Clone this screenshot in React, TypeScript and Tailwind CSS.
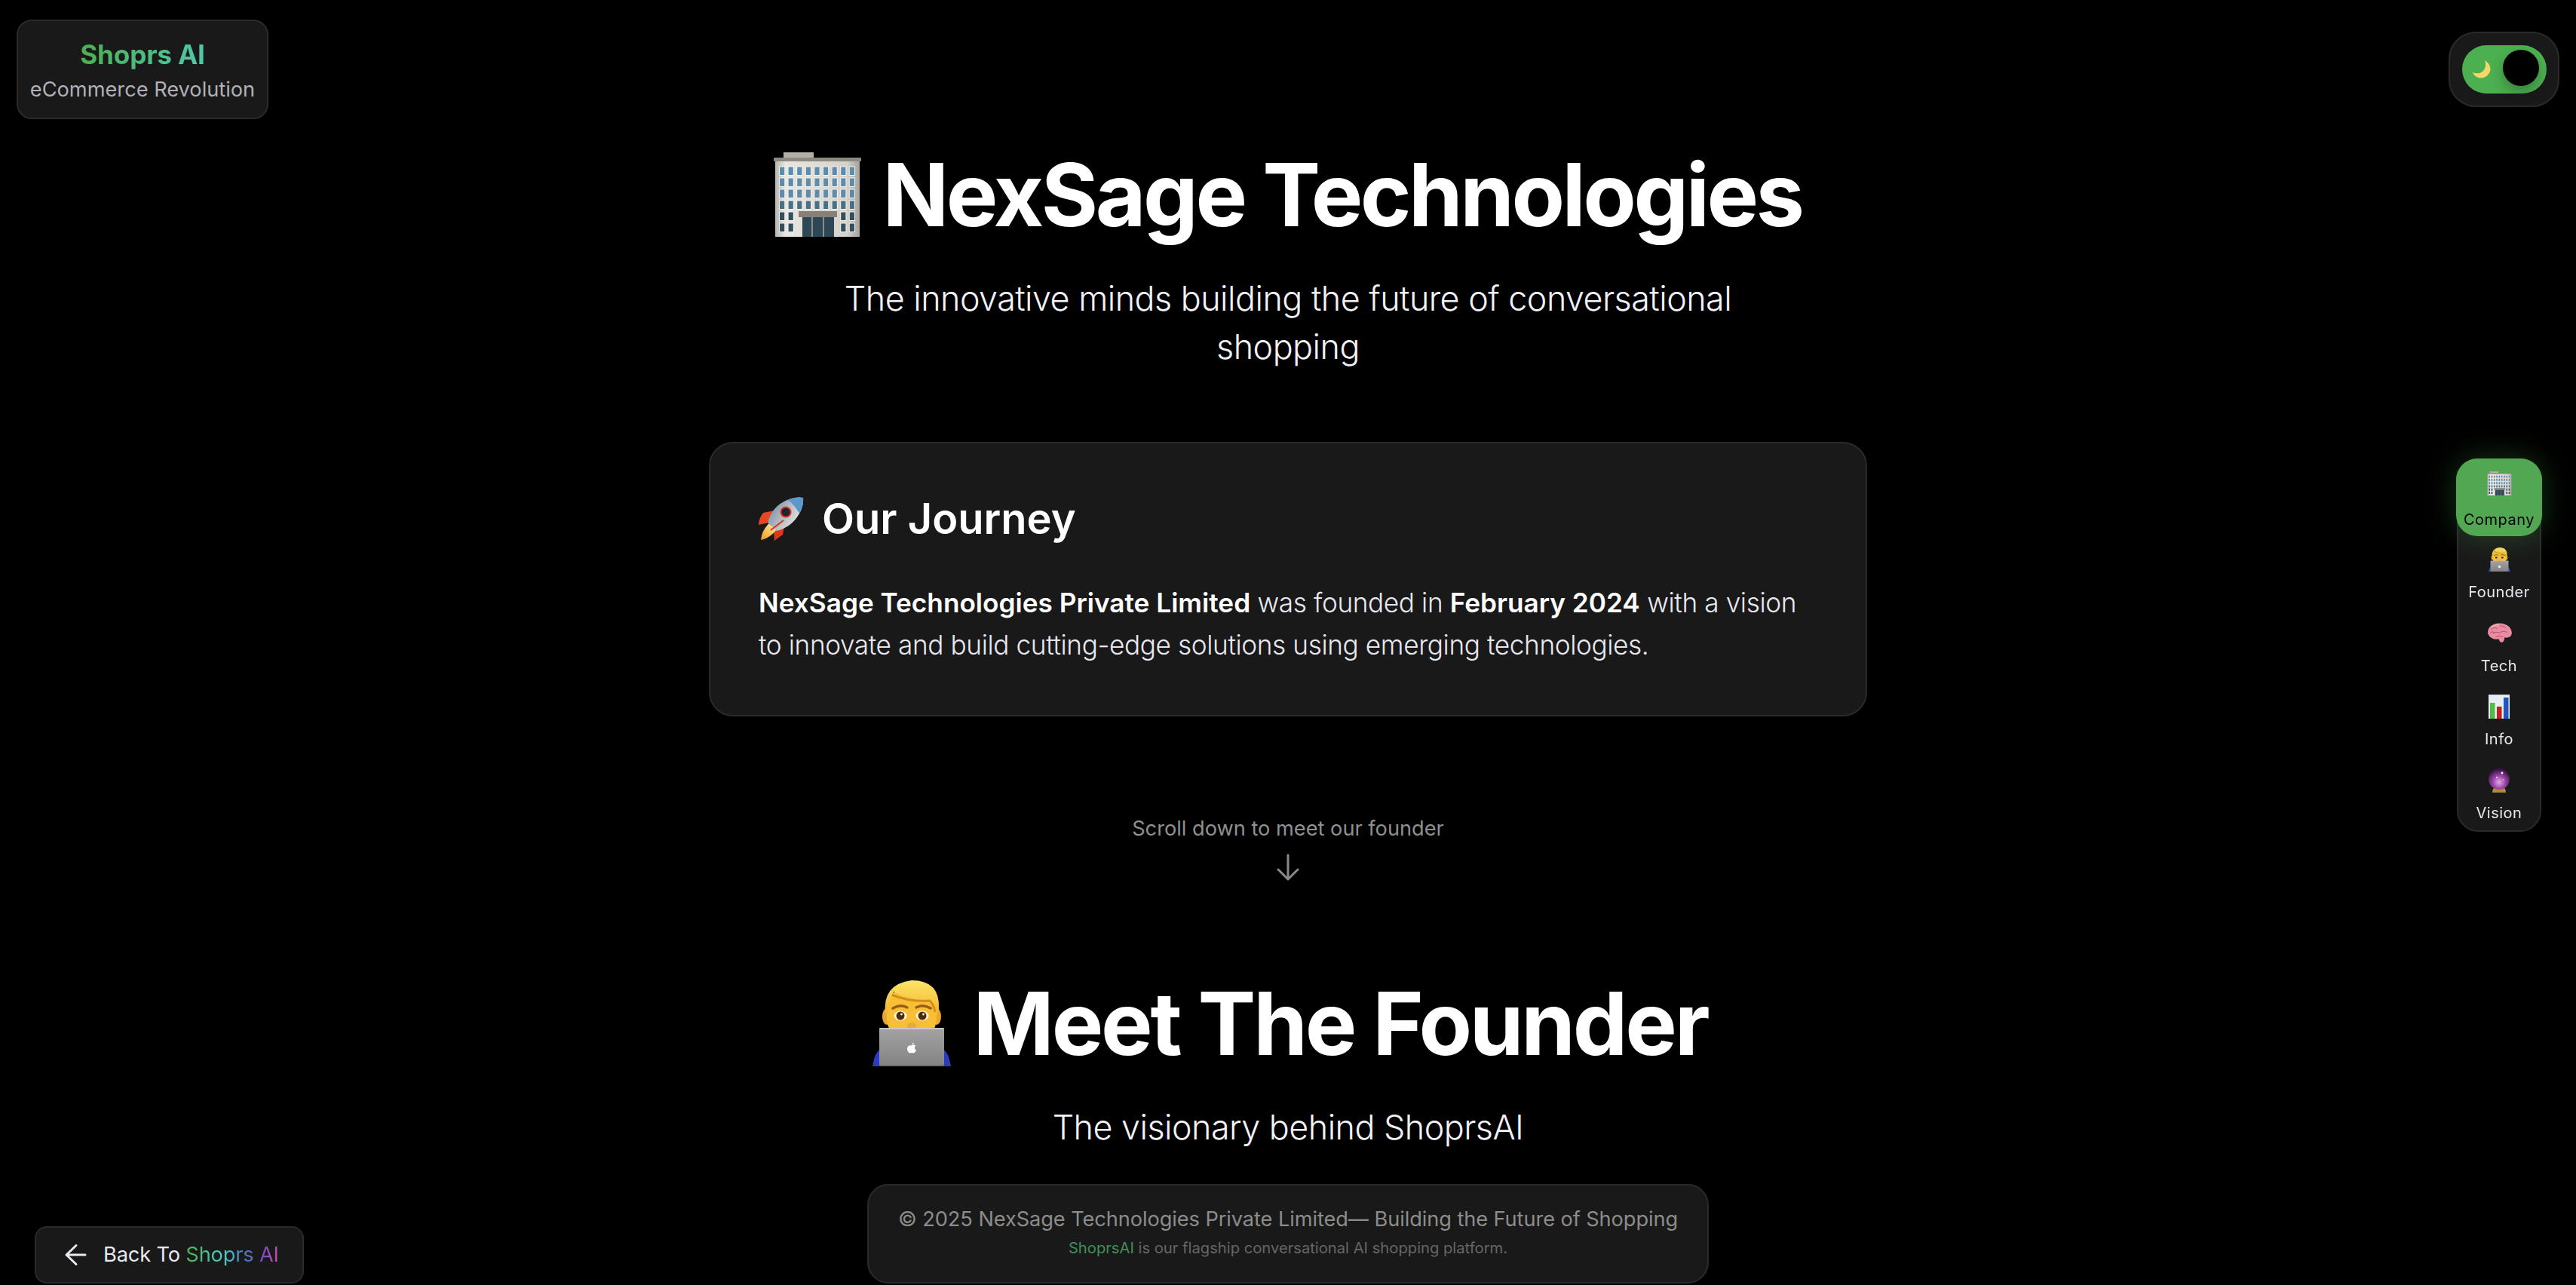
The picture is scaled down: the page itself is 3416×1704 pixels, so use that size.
import React from "react";

function Building({ className }: { className: string }) {
  const cols = [0, 1, 2, 3, 4, 5, 6, 7, 8];
  const rows = [0, 1, 2, 3, 4, 5];
  return (
    <svg viewBox="0 0 116 112" className={className}>
      <defs>
        <linearGradient id="bBody" x1="0" y1="0" x2="1" y2="0">
          <stop offset="0" stopColor="#b9b5ae" />
          <stop offset="0.12" stopColor="#e9e7e1" />
          <stop offset="0.85" stopColor="#d5d2cb" />
          <stop offset="1" stopColor="#a7a39c" />
        </linearGradient>
      </defs>
      <rect x="13" y="0" width="40" height="8" fill="#b3aea6" />
      <rect x="2" y="10" width="112" height="102" fill="url(#bBody)" />
      <rect x="0" y="7" width="116" height="5" rx="1" fill="#8d8880" />
      {rows.map((r) =>
        cols.map((c) =>
          r > 3 && c > 1 && c < 7 ? null : (
            <g key={`${r}-${c}`}>
              <rect x={7 + c * 11.6} y={18.5 + r * 15} width={8.2} height={12.5} fill="#f2f2ee" />
              <rect
                x={8 + c * 11.6}
                y={19.5 + r * 15}
                width={6.2}
                height={10.5}
                fill={r > 3 ? "#33505f" : r > 2 ? "#4a7088" : "#5f8cab"}
              />
            </g>
          )
        )
      )}
      <rect x="33" y="78" width="51" height="8" fill="#86807a" />
      <rect x="38" y="86" width="42" height="26" fill="#2f4654" />
      <rect x="50" y="86" width="2" height="26" fill="#88908f" />
      <rect x="65" y="86" width="2" height="26" fill="#88908f" />
    </svg>
  );
}

function Technologist({ className }: { className: string }) {
  return (
    <svg viewBox="0 0 104 114" className={className}>
      <defs>
        <linearGradient id="tLaptop" x1="0" y1="0" x2="0" y2="1">
          <stop offset="0" stopColor="#a3a3a3" />
          <stop offset="1" stopColor="#838383" />
        </linearGradient>
        <linearGradient id="tHair" x1="0" y1="0" x2="0" y2="1">
          <stop offset="0" stopColor="#fde468" />
          <stop offset="1" stopColor="#f0b428" />
        </linearGradient>
      </defs>
      <path d="M0 114Q3 95 11 91V114Z" fill="#2b3cc0" />
      <path d="M104 114Q101 95 93 91V114Z" fill="#2b3cc0" />
      <ellipse cx="19" cy="48" rx="6" ry="11" fill="#e9a92b" />
      <ellipse cx="85" cy="48" rx="6" ry="11" fill="#e9a92b" />
      <path d="M19 30Q19 12 52 12Q85 12 85 30V50Q85 68 70 72H34Q19 68 19 50Z" fill="#f8bf36" />
      <path d="M25 19Q50 29 76 27Q81 32 83 42" fill="none" stroke="#d28f1c" strokeWidth="3" />
      <path d="M17 44Q13 5 52 0Q90 0 88 38Q88 44 85 46Q84 31 76 25Q50 28 28 15Q21 26 20 44Z" fill="url(#tHair)" />
      <path d="M27 37Q37 31 46 36" fill="none" stroke="#9a5b14" strokeWidth="3.5" strokeLinecap="round" />
      <path d="M58 36Q67 31 77 37" fill="none" stroke="#9a5b14" strokeWidth="3.5" strokeLinecap="round" />
      <ellipse cx="37" cy="47" rx="8.5" ry="6.5" fill="#fff6d8" />
      <ellipse cx="66" cy="47" rx="8.5" ry="6.5" fill="#fff6d8" />
      <circle cx="37" cy="47" r="5.5" fill="#4d2c0e" />
      <circle cx="66" cy="47" r="5.5" fill="#4d2c0e" />
      <circle cx="38.5" cy="45" r="1.4" fill="#fff" />
      <circle cx="67.5" cy="45" r="1.4" fill="#fff" />
      <ellipse cx="52" cy="60" rx="6" ry="4" fill="#e8a93a" />
      <rect x="9" y="63" width="86" height="51" rx="3" fill="url(#tLaptop)" />
      <rect x="9" y="63" width="86" height="2" rx="1" fill="#c7c7c7" />
      <rect x="10" y="112" width="84" height="2" rx="1" fill="#6f6f6f" />
      <path d="M52.3 86.5C53.5 85 55.8 85 57.4 86.6C55.2 88 55.4 91.4 58 92.5C57.2 94.8 55.7 96.5 54.5 96.5C53.4 96.5 53 95.9 52 95.9C51 95.9 50.5 96.5 49.5 96.5C47.8 96.5 46 93.3 46 90.6C46 87.2 49.3 85.3 52.3 86.5Z" fill="#fff" />
      <path d="M52 85.5C52.1 84 53.2 82.9 54.7 82.7C54.7 84.3 53.5 85.5 52 85.5Z" fill="#fff" />
    </svg>
  );
}

function Rocket({ className }: { className: string }) {
  return (
    <svg viewBox="0 0 60 58" className={className}>
      <defs>
        <linearGradient id="rBody" x1="0" y1="0" x2="1" y2="0.6">
          <stop offset="0" stopColor="#4f86c0" />
          <stop offset="0.5" stopColor="#aeb4b8" />
          <stop offset="1" stopColor="#e9e9e6" />
        </linearGradient>
        <linearGradient id="rFlame" x1="1" y1="0" x2="0" y2="1">
          <stop offset="0" stopColor="#fff2a0" />
          <stop offset="1" stopColor="#f09a1d" />
        </linearGradient>
      </defs>
      <path d="M20 18L6 21Q0 29 0 37L13 34Z" fill="#e8481f" />
      <path d="M34 38L32 50Q26 54 21 58L20 45Z" fill="#dd3a1c" />
      <path d="M14 35Q4 44 3 57Q16 54 24 43Z" fill="url(#rFlame)" />
      <path d="M12 34Q18 12 38 4Q50 -1 59 1Q60 12 54 22Q44 40 24 45Z" fill="url(#rBody)" />
      <path d="M38 4Q50 -1 59 1Q60 12 54 22Q46 8 38 4Z" fill="#5c98cc" />
      <circle cx="36" cy="20" r="7.6" fill="#e2352a" />
      <circle cx="36" cy="20" r="5.6" fill="#20242c" />
      <path d="M33 31L16 44" stroke="#c9372a" strokeWidth="2" />
    </svg>
  );
}

function Brain({ className }: { className: string }) {
  return (
    <svg viewBox="0 0 34 28" className={className}>
      <path d="M1 13Q1 5 9 2Q17 -1 25 2Q33 5 34 13Q34 19 29 20Q26 21 24 20Q24 26 20 27Q17 26 16 22Q10 24 5 20Q1 17 1 13Z" fill="#e98ba1" />
      <path d="M6 9Q10 5 14 8M17 4Q22 3 26 7M8 15Q13 11 17 14Q21 10 28 13M12 19Q17 17 22 19M4 13Q8 12 10 13" fill="none" stroke="#b4506c" strokeWidth="1" />
      <path d="M7 5Q12 2 17 3" fill="none" stroke="#f7c2ce" strokeWidth="1" />
    </svg>
  );
}

function Chart({ className }: { className: string }) {
  return (
    <svg viewBox="0 0 28 32" className={className}>
      <rect width="28" height="32" fill="#e6eef4" />
      <rect x="0" y="0" width="28" height="1" fill="#c6ccd2" />
      <rect x="2" y="11" width="6.5" height="21" fill="#52ba4a" />
      <rect x="11" y="16" width="6.5" height="16" fill="#c0201c" />
      <rect x="20" y="4" width="6.5" height="28" fill="#2058b8" />
    </svg>
  );
}

function Ball({ className }: { className: string }) {
  return (
    <svg viewBox="0 0 28 32" className={className}>
      <defs>
        <radialGradient id="cBall" cx="0.5" cy="0.65" r="0.6">
          <stop offset="0" stopColor="#e7a7ea" />
          <stop offset="0.5" stopColor="#9a47a6" />
          <stop offset="1" stopColor="#3c1148" />
        </radialGradient>
      </defs>
      <path d="M5 32Q5 26 9 25H19Q23 26 23 32Z" fill="#b48a33" />
      <circle cx="14" cy="14" r="14" fill="url(#cBall)" />
      <circle cx="18" cy="6" r="1.4" fill="#fff" />
      <circle cx="11" cy="12" r="0.9" fill="#fff" />
      <circle cx="20" cy="15" r="0.7" fill="#fff" />
    </svg>
  );
}

function Moon({ className }: { className: string }) {
  return (
    <svg viewBox="0 0 24 24" className={className}>
      <path d="M16 0Q24 5 23.5 13Q21 23 10 23.5Q3 23 0 16Q8 19.5 14 14Q19 8 16 0Z" fill="#f3d76a" />
    </svg>
  );
}

const NAV = [
  { label: "Company", Icon: Building, active: true },
  { label: "Founder", Icon: Technologist, active: false },
  { label: "Tech", Icon: Brain, active: false },
  { label: "Info", Icon: Chart, active: false },
  { label: "Vision", Icon: Ball, active: false },
];

export default function App() {
  return (
    <div className="relative h-screen overflow-hidden bg-black text-white font-['Inter',sans-serif]">
      <main className="flex flex-col items-center pt-[189px]">
        <h1 className="flex items-center gap-[28px] text-[115.2px] leading-[138px] font-bold tracking-[-3.5px]">
          <Building className="h-[112px] w-[116px] shrink-0" />
          <span>NexSage Technologies</span>
        </h1>
        <p className="mt-[37px] max-w-[1300px] text-center text-[44.8px] leading-[64px] font-[350] tracking-[-0.5px] text-[#f2f2f8]">
          The innovative minds building the future of conversational shopping
        </p>

        <section className="mt-[94px] flex h-[364px] w-[1536px] flex-col rounded-[32px] border-2 border-[#2a2a2a] bg-[#191919] px-[64px] pt-[60px]">
          <h2 className="flex items-center gap-[24px] text-[56px] leading-[80px] font-semibold">
            <Rocket className="h-[58px] w-[60px] shrink-0" />
            <span>Our Journey</span>
          </h2>
          <p className="mt-[43px] text-[35.2px] leading-[56px] font-[350] tracking-[-0.4px] text-[#e8e8f0]">
            <strong className="font-semibold tracking-normal text-white">NexSage Technologies Private Limited</strong> was founded in{" "}
            <strong className="font-semibold tracking-normal text-white">February 2024</strong> with a vision to innovate and build
            cutting-edge solutions using emerging technologies.
          </p>
        </section>

        <p className="mt-[126px] text-[27.2px] leading-[46px] text-[#909090]">Scroll down to meet our founder</p>
        <svg viewBox="0 0 30 36" className="mt-[10px] h-[36px] w-[30px]" fill="none" stroke="#888888" strokeWidth="3" strokeLinecap="round" strokeLinejoin="round">
          <path d="M15 2V34M2 21L15 34L28 21" />
        </svg>

        <h1 className="ml-[5px] mt-[120px] flex items-center gap-[30px] text-[115.2px] leading-[138px] font-bold tracking-[-3.2px]">
          <Technologist className="h-[114px] w-[104px] shrink-0" />
          <span>Meet The Founder</span>
        </h1>
        <p className="mt-[37px] text-center text-[44.8px] leading-[64px] font-[350] tracking-[-0.5px] text-[#f2f2f8]">The visionary behind ShoprsAI</p>
      </main>

      <div className="fixed left-[22px] top-[26px] flex h-[132px] w-[334px] flex-col items-center justify-center rounded-[20px] border-2 border-[#2a2a2a] bg-[#191919] pt-[5px]">
        <span className="bg-gradient-to-r from-[#4caf50] to-[#50c8a8] bg-clip-text text-[35.2px] leading-[48px] font-bold tracking-[-0.2px] text-transparent">
          Shoprs AI
        </span>
        <span className="text-[27.2px] leading-[46px] text-[#b0b0b8]">eCommerce Revolution</span>
      </div>

      <div className="fixed left-[3247px] top-[42px] flex h-[100px] w-[147px] items-center justify-center rounded-[36px] border-2 border-[#2a2a2a] bg-[#191919]">
        <div className="relative h-[64px] w-[112px] rounded-full bg-[#4caf50]">
          <Moon className="absolute left-[14px] top-[20px] h-[24px] w-[24px]" />
          <div className="absolute right-[10px] top-[6px] h-[48px] w-[48px] rounded-full bg-black shadow-[0_8px_16px_rgba(0,0,0,0.25)]" />
        </div>
      </div>

      <nav className="fixed left-[3258px] top-[608px] flex h-[495px] w-[112px] flex-col items-center rounded-[28px] border-2 border-[#2a2a2a] bg-[#191919]">
        {NAV.map(({ label, Icon, active }) => (
          <div
            key={label}
            className={
              active
                ? "relative -mx-[3px] -mt-[2px] flex h-[104px] w-[114px] flex-col items-center rounded-[28px] bg-[#52a852] pt-[16px] text-black shadow-[0_0_40px_rgba(76,175,80,0.3)]"
                : "flex h-[98px] w-full flex-col items-center pt-[14px] text-[#e8e8f0]"
            }
          >
            <span className="flex h-[34px] items-center">
              <Icon className={label === "Tech" ? "h-[27px] w-[33px]" : label === "Founder" ? "h-[32px] w-[29px]" : label === "Company" ? "h-[32px] w-[33px]" : "h-[32px] w-[28px]"} />
            </span>
            <span className={active ? "mt-[15px] text-[20px] leading-[32px] tracking-[0.5px]" : "mt-[10px] text-[20px] leading-[32px] tracking-[0.5px]"}>{label}</span>
          </div>
        ))}
      </nav>

      <button className="fixed left-[46px] top-[1626px] flex h-[76px] w-[357px] items-center gap-[22px] rounded-[16px] border-2 border-[#2a2a2a] bg-[#191919] pl-[37px] text-[27.2px] tracking-[-0.15px] text-[#e8e8f0]">
        <svg viewBox="0 0 30 30" className="h-[30px] w-[30px]" fill="none" stroke="#e8e8f0" strokeWidth="3" strokeLinecap="round" strokeLinejoin="round">
          <path d="M28 15H3M16 2.5L3 15L16 27.5" />
        </svg>
        <span>
          Back To{" "}
          <span className="bg-[linear-gradient(90deg,#4caf50_0%,#4ecdc4_40%,#4a7fc0_62%,#7a4fc0_82%,#c050b0_100%)] bg-clip-text text-transparent">Shoprs AI</span>
        </span>
      </button>

      <footer className="fixed left-[1150px] top-[1570px] flex h-[132px] w-[1116px] flex-col items-center justify-center rounded-[28px] border-2 border-[#2a2a2a] bg-[#191919] pb-[6px]">
        <p className="text-[27.2px] leading-[44px] tracking-[-0.08px] text-[#8c8c8c]">© 2025 NexSage Technologies Private Limited— Building the Future of Shopping</p>
        <p className="text-[20.2px] leading-[32px] text-[#666666]">
          <span className="text-[#3f8f5a]">ShoprsAI</span> is our flagship conversational AI shopping platform.
        </p>
      </footer>
    </div>
  );
}
